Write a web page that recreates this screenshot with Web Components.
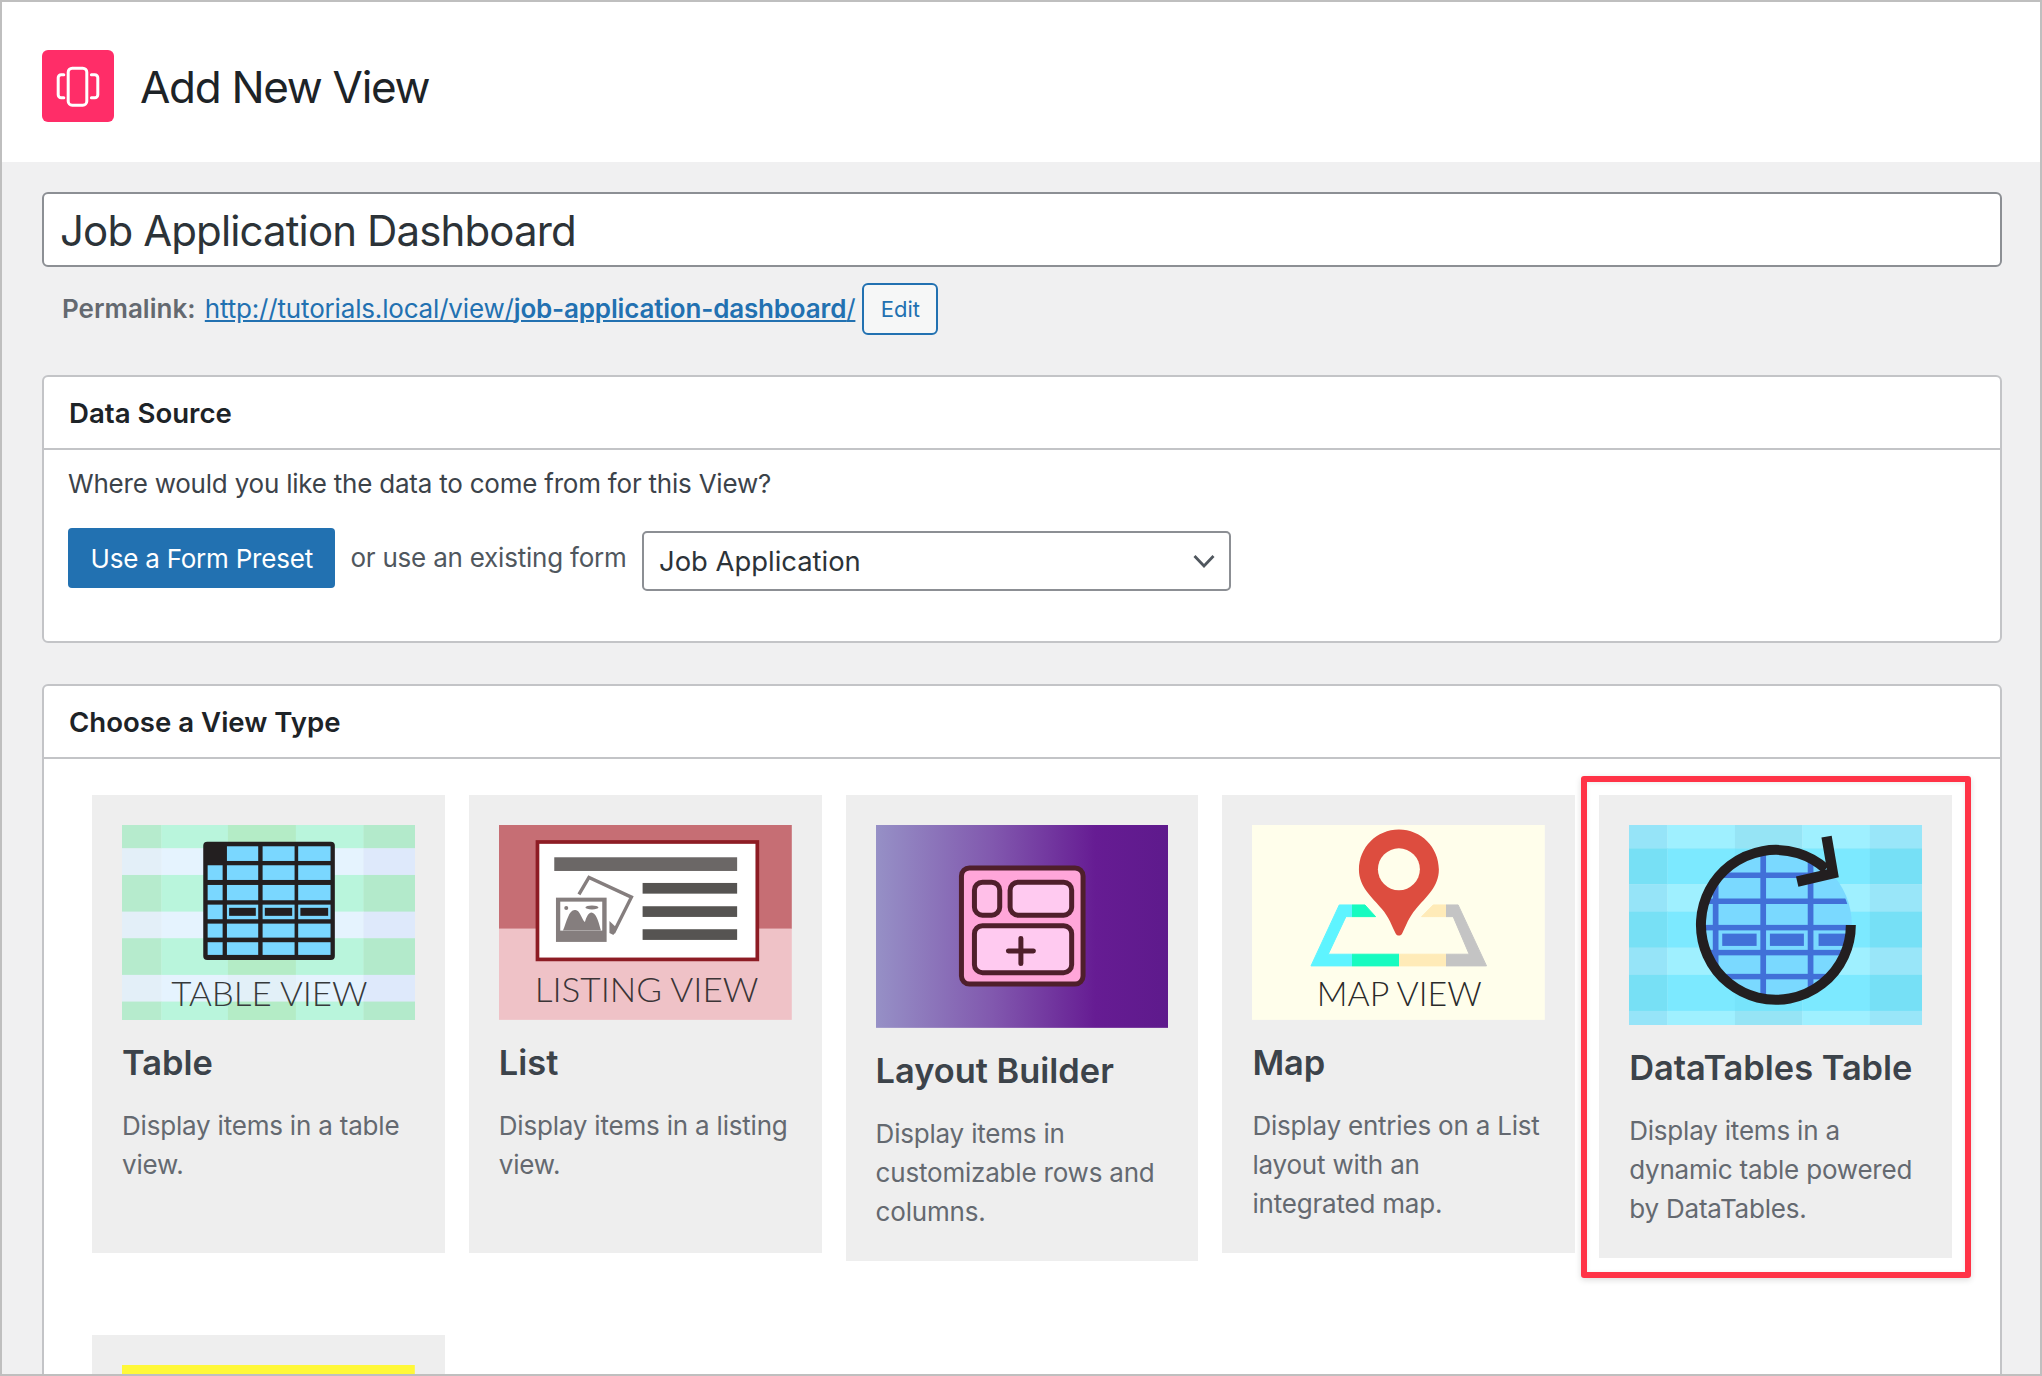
<!doctype html>
<html lang="en">
<head>
<meta charset="utf-8">
<title>Add New View</title>
<style>
  html, body { margin: 0; padding: 0; background: #f0f0f1; }
  body { font-family: Inter, "Liberation Sans", sans-serif; }
</style>
</head>
<body>
<app-frame>
  <page-header title-text="Add New View"></page-header>
  <page-main>
    <title-field value="Job Application Dashboard"></title-field>
    <permalink-row></permalink-row>
    <meta-box heading="Data Source" style="margin-top:40px">
      <source-form></source-form>
    </meta-box>
    <meta-box heading="Choose a View Type" style="margin-top:41px">
      <view-grid>
        <view-card name="Table" desc="Display items in a table view."><view-thumb kind="table"></view-thumb></view-card>
        <view-card name="List" desc="Display items in a listing view."><view-thumb kind="list"></view-thumb></view-card>
        <view-card name="Layout Builder" desc="Display items in customizable rows and columns."><view-thumb kind="layout"></view-thumb></view-card>
        <view-card name="Map" desc="Display entries on a List layout with an integrated map."><view-thumb kind="map"></view-thumb></view-card>
        <view-card name="DataTables Table" desc="Display items in a dynamic table powered by DataTables." highlight><view-thumb kind="datatables"></view-thumb></view-card>
        <view-card name="" desc=""><view-thumb kind="yellow"></view-thumb></view-card>
      </view-grid>
    </meta-box>
  </page-main>
</app-frame>
<script>
function bands(xs, ys, colA, colB) {
  let s = '';
  for (let r = 0; r < ys.length - 1; r++) {
    const pal = r % 2 === 0 ? colA : colB;
    for (let c = 0; c < xs.length - 1; c++) {
      s += `<rect x="${xs[c]}" y="${ys[r]}" width="${xs[c+1]-xs[c]+.3}" height="${ys[r+1]-ys[r]+.3}" fill="${pal[c]}"/>`;
    }
  }
  return s;
}
const lbl = (t, x, w, y, fs, fill) =>
  `<text x="${x}" y="${y}" font-family="Lato, 'Open Sans', sans-serif" font-weight="300" font-size="${fs}" fill="${fill}" textLength="${w}" lengthAdjust="spacingAndGlyphs">${t}</text>`;

function tableIcon() {
  const cx = [[85.7,100.7],[105,136.3],[140.7,172.7],[176.3,208.7]];
  const cy = [[21.3,36],[40.3,55],[60,75.3],[79.7,94.3],[98.7,112.7],[117.3,130]];
  let s = '<rect x="81.3" y="16.7" width="131.7" height="118.3" rx="4" fill="#231f20"/>';
  cy.forEach((y, r) => cx.forEach((x, c) => {
    if (r === 0 && c === 0) return;
    s += `<rect x="${x[0]}" y="${y[0]}" width="${x[1]-x[0]}" height="${y[1]-y[0]}" fill="#7ad7ff"/>`;
    if (r === 3 && c > 0) s += `<rect x="${x[0]+2.2}" y="${y[0]+3.2}" width="${x[1]-x[0]-4.6}" height="${y[1]-y[0]-6.6}" fill="#231f20"/>`;
  }));
  return s;
}

const THUMBS = {
  table: { h: 195, svg: () =>
    bands([0,39.3,106,174,241.7,293],[0,23.3,50,86.7,113.3,150,176.7,195],
      ['#b6ebcd','#b9f5dc','#b4ecc6','#b9f5dc','#b3eacb'],
      ['#e3eff8','#e5f3fe','#e2f0f8','#e5f3fe','#dee9fb']) +
    tableIcon() + lbl('TABLE VIEW', 49.2, 196.5, 181.3, 34, '#36393b') },
  list: { h: 195, svg: () => `
    <rect width="293" height="104" fill="#c66e74"/>
    <rect y="103.7" width="293" height="91.3" fill="#efc2c7"/>
    <rect x="38.5" y="17" width="220" height="117.5" fill="#fff" stroke="#8d1c24" stroke-width="3.7"/>
    <rect x="55.3" y="32.3" width="183" height="13.7" fill="#6b6766"/>
    <rect x="143.7" y="58" width="94.6" height="10.7" fill="#565452"/>
    <rect x="143.7" y="81.3" width="94.6" height="10.7" fill="#565452"/>
    <rect x="143.7" y="104.3" width="94.6" height="10.7" fill="#565452"/>
    <path d="M80 69.5 L90 52.5 L132.5 72.2 L114.5 108" fill="none" stroke="#857e7e" stroke-width="3.4"/>
    <path d="M110.5 96 L118 103 L114.5 110 L110.5 108 Z" fill="#857e7e"/>
    <rect x="57" y="72.7" width="50.7" height="44.3" fill="#857e7e"/>
    <rect x="61.3" y="76.7" width="42" height="29" fill="#fff"/>
    <path d="M64 105.7 C68 96 70 84 76.5 85 C81 85 83 95 86 97 C88 90 91 86 94 88 C98 90 100 98 102 105.7 Z" fill="#857e7e"/>
    <circle cx="67.3" cy="83" r="2" fill="#857e7e"/>
    <ellipse cx="93" cy="82.5" rx="6.5" ry="2" fill="#857e7e"/>
    ${lbl('LISTING VIEW', 35.7, 224, 177, 33.5, '#3a3436')}` },
  layout: { h: 203, svg: () => `
    <defs><linearGradient id="g" x1="0" x2="1" y1="0" y2="0">
      <stop offset="0" stop-color="#9690c6"/><stop offset=".4" stop-color="#8158ae"/>
      <stop offset=".75" stop-color="#661c93"/><stop offset="1" stop-color="#5e1a8c"/></linearGradient></defs>
    <rect width="293" height="203" fill="url(#g)"/>
    <g stroke="#4f1f2b" stroke-width="5">
      <rect x="85.5" y="43" width="121.7" height="116.2" rx="8" fill="#ffa6d9"/>
      <rect x="98.5" y="57.2" width="25.3" height="33" rx="8" fill="#ffbfe8"/>
      <rect x="134.2" y="57.2" width="61.6" height="33" rx="8" fill="#ffcaf0"/>
      <rect x="98.5" y="100.8" width="97.3" height="47" rx="8" fill="#ffcaf0"/>
      <path d="M132.5 126 H157.5 M145 113.5 V138.5" stroke-linecap="round" fill="none"/>
    </g>` },
  map: { h: 195, svg: () => `
    <defs><linearGradient id="m" gradientUnits="userSpaceOnUse" x1="0" x2="293" y1="0" y2="0">
      <stop offset=".3413" stop-color="#5ef4ff"/><stop offset=".3413" stop-color="#17fbc0"/>
      <stop offset=".5027" stop-color="#17fbc0"/><stop offset=".5027" stop-color="#ffebb8"/>
      <stop offset=".6621" stop-color="#ffebb8"/><stop offset=".6621" stop-color="#c4c4c4"/></linearGradient></defs>
    <rect width="293" height="195" fill="#fffeeb"/>
    <path d="M59 141 L87.3 80 H113 L123.7 91.7 H94 L76.3 129.3 H217.3 L201.3 91.7 H169.7 L181.3 80 H206.3 L234.7 141 Z" fill="url(#m)" stroke="url(#m)" stroke-width="1" stroke-linejoin="round"/>
    <path d="M147 4.5 C169.2 4.5 187 22.4 187 44.5 C187 62 174 72 164 84 C157 92 154 101 150.5 108 C149 111.6 145 111.6 143.5 108 C140 101 137 92 130 84 C120 72 107 62 107 44.5 C107 22.4 124.8 4.5 147 4.5 Z" fill="#dd4d3f"/>
    <circle cx="147" cy="44.3" r="21" fill="#fffeeb"/>
    ${lbl('MAP VIEW', 64.8, 165, 181, 33.5, '#2a2a2a')}` },
  datatables: { h: 200, svg: () => {
    const v = [86.7,134.3,181.7].map(x => `<rect x="${x-2.85}" y="0" width="5.7" height="200" fill="#4170d8"/>`).join('');
    const h = [50.3,76.3,102.7,127.7,151.7].map(y => `<rect x="0" y="${y-2.75}" width="293" height="5.5" fill="#4170d8"/>`).join('');
    const b = [[93.3,34.4],[141,34],[189.7,34]].map(([x,w]) =>
      `<rect x="${x-2}" y="106.7" width="${w+4}" height="16.3" fill="#7ad9ff"/><rect x="${x}" y="108.7" width="${w}" height="12.3" fill="#4170d8"/>`).join('');
    return bands([0,38.3,106,173.3,241,293],[0,23.3,59.3,86.7,122.7,150,186,200],
      ['#96e4f8','#9ff0ff','#96e4f5','#9ff0ff','#99e6f9'],
      ['#77e0f5','#7ce9ff','#77e4fb','#7ce9ff','#76e0f6']) + `
    <defs><clipPath id="c"><circle cx="147" cy="100" r="74.5"/></clipPath></defs>
    <circle cx="147" cy="100" r="76" fill="#7ad9ff"/>
    <g clip-path="url(#c)">${v}${h}${b}</g>
    <path d="M222 100 A75 75 0 1 1 197 44" fill="none" stroke="#231f20" stroke-width="10"/>
    <path d="M197.7 11.7 L204 48.3 L168.3 56.7" fill="none" stroke="#231f20" stroke-width="10.4" stroke-linejoin="miter"/>`;
  } },
  yellow: { h: 195, svg: () => '<rect width="293" height="195" fill="#fff838"/>' }
};

function define(name, css, html) {
  customElements.define(name, class extends HTMLElement {
    constructor() {
      super();
      this.attachShadow({ mode: 'open' });
    }
    connectedCallback() {
      const h = typeof html === 'function' ? html(this) : html;
      this.shadowRoot.innerHTML = `<style>${css}</style>${h}`;
    }
  });
}

define('app-frame', `
  :host { display:block; width:2042px; height:1376px; box-sizing:border-box; border:2px solid #bfbfbf; background:#f0f0f1; overflow:hidden; }
`, `<slot></slot>`);

define('page-header', `
  :host { display:flex; align-items:center; gap:26px; height:160px; box-sizing:border-box; padding:8px 40px 0; background:#fff; }
  .logo { width:72px; height:72px; border-radius:6px; background:#ff2d68; flex:none; }
  .logo svg { display:block; }
  h1 { margin:3px 0 0; font:400 44px/1.2 Inter, "Liberation Sans", sans-serif; letter-spacing:-1.3px; color:#1d2327; white-space:nowrap; }
`, el => `<div class="logo"><svg width="72" height="72" viewBox="0 0 72 72" fill="none" stroke="#fff" stroke-width="3" stroke-linecap="round" stroke-linejoin="round">
    <rect x="26.2" y="18.2" width="18.6" height="37" rx="4"/>
    <path d="M21.8 24.8 H19.2 A3 3 0 0 0 16.2 27.8 V44.8 A3 3 0 0 0 19.2 47.8 H21.8"/>
    <path d="M49.4 24.8 H52.8 A3 3 0 0 1 55.8 27.8 V44.8 A3 3 0 0 1 52.8 47.8 H49.4"/>
  </svg></div><h1>${el.getAttribute('title-text') || ''}</h1>`);

define('page-main', `:host { display:block; padding:30px 38px 0 40px; }`, `<slot></slot>`);

define('title-field', `
  :host { display:flex; align-items:center; height:75px; box-sizing:border-box; padding:4px 16px 0; background:#fff; border:2px solid #8c8f94; border-radius:6px;
    font:400 42px/1.2 Inter, "Liberation Sans", sans-serif; letter-spacing:-.88px; color:#2c3338; }
`, el => `<span>${el.getAttribute('value') || ''}</span>`);

define('permalink-row', `
  :host { display:flex; align-items:center; gap:7px; padding:16px 0 0 20px; font:400 26px/1 Inter, "Liberation Sans", sans-serif; color:#646970; }
  .label { font-weight:600; margin-right:2px; }
  a { color:#2271b1; text-decoration:underline; letter-spacing:-.17px; }
  b { font-weight:600; }
  .edit { display:flex; align-items:center; justify-content:center; width:76px; height:52px; box-sizing:border-box; border:2px solid #2271b1; border-radius:6px; background:#f6f7f7; color:#2271b1; font-size:22px; }
`, `<span><span class="label">Permalink:</span> <a href="#"><span>http://tutorials.local/view/</span><b>job-application-dashboard</b>/</a></span><span class="edit">Edit</span>`);

define('meta-box', `
  :host { display:block; background:#fff; border:2px solid #c3c4c7; border-radius:6px; }
  .head { height:73px; box-sizing:border-box; padding:2px 24px 0 25px; display:flex; align-items:center; border-bottom:2px solid #c3c4c7; font:600 27.6px/1 Inter, "Liberation Sans", sans-serif; color:#1d2327; }
`, el => `<div class="head">${el.getAttribute('heading') || ''}</div><slot></slot>`);

define('source-form', `
  :host { display:block; padding:14px 24px 50px; font:400 26px/39px Inter, "Liberation Sans", sans-serif; letter-spacing:-.22px; color:#3c434a; }
  .q { margin:0 0 25px; }
  .row { display:flex; align-items:flex-start; }
  .btn { height:60px; box-sizing:border-box; padding:0 22.5px; display:flex; align-items:center; background:#2271b1; color:#fff; border-radius:4px; white-space:nowrap; }
  .or { margin-left:15px; line-height:60px; white-space:nowrap; color:#50575e; }
  .sel { margin:3px 0 0 15.5px; width:589px; height:60px; box-sizing:border-box; padding:0 14px 0 15px; display:flex; align-items:center; justify-content:space-between; background:#fff; border:2px solid #8c8f94; border-radius:5px; color:#2c3338; font-size:27.4px; letter-spacing:0; }
`, `<p class="q">Where would you like the data to come from for this View?</p>
  <div class="row"><div class="btn">Use a Form Preset</div><div class="or">or use an existing form</div>
  <div class="sel"><span>Job Application</span><svg width="22" height="14" viewBox="0 0 22 14"><path d="M1.5 2 L11 12 L20.5 2" fill="none" stroke="#50575e" stroke-width="2.8"/></svg></div></div>`);

define('view-grid', `
  :host { display:grid; grid-template-columns:repeat(5, 1fr); column-gap:24px; row-gap:74px; padding:36px 48px 40px; align-items:start; }
`, `<slot></slot>`);

define('view-card', `
  :host { display:block; position:relative; background:#eee; padding:30px; box-sizing:border-box; }
  h3 { margin:21px 0 21px; font:600 34.4px/44px Inter, "Liberation Sans", sans-serif; color:#3c434a; white-space:nowrap; }
  p { margin:0; min-height:117px; font:400 26px/39px Inter, "Liberation Sans", sans-serif; letter-spacing:-.2px; color:#646970; }
  .mark { position:absolute; top:-19px; left:-18px; right:-19px; bottom:-20px; border:6px solid #ff3347; border-radius:3px; box-shadow:0 2px 6px rgba(0,0,0,.14), inset 0 1px 4px rgba(0,0,0,.08); pointer-events:none; }
`, el => `<slot></slot><h3>${el.getAttribute('name') || ''}</h3><p>${el.getAttribute('desc') || ''}</p>${el.hasAttribute('highlight') ? '<div class="mark"></div>' : ''}`);

define('view-thumb', `
  :host { display:block; line-height:0; }
  svg { display:block; width:100%; height:auto; }
`, el => {
  const t = THUMBS[el.getAttribute('kind')];
  return `<svg viewBox="0 0 293 ${t.h}" xmlns="http://www.w3.org/2000/svg">${t.svg()}</svg>`;
});
</script>
</body>
</html>
